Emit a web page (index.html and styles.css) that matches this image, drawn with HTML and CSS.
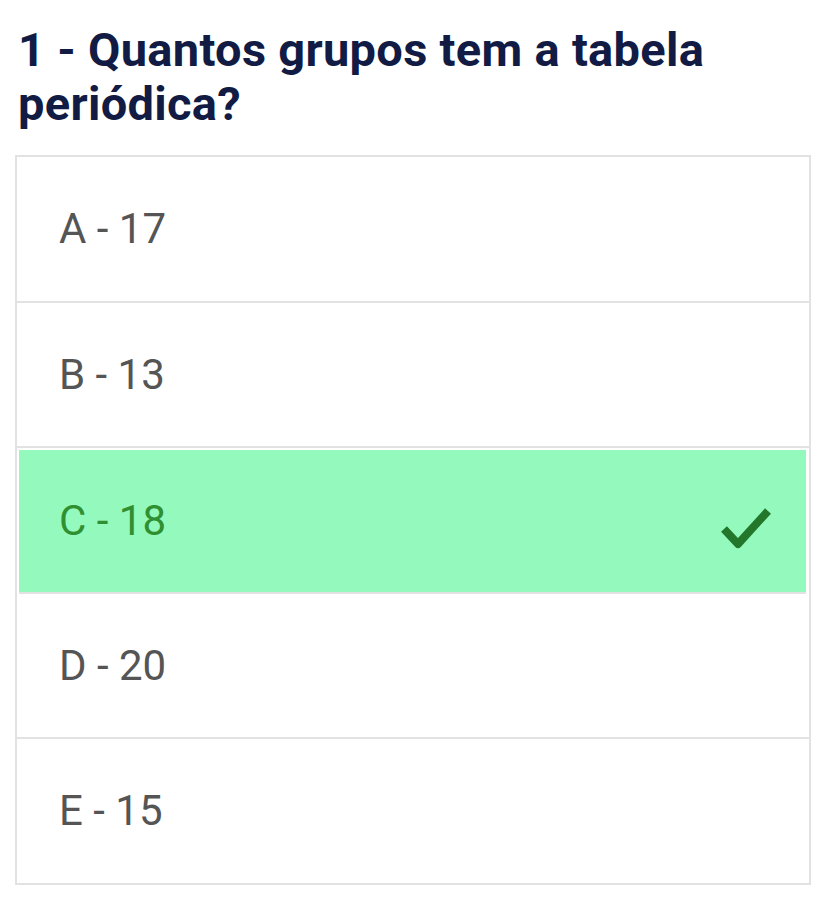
FILE: index.html
```html
<!DOCTYPE html>
<html lang="pt">
<head>
<meta charset="utf-8">
<link rel="stylesheet" href="styles.css">
</head>
<body>
<div class="quiz">
  <h1 class="question">1 - Quantos grupos tem a tabela periódica?</h1>
  <ul class="options">
    <li class="option">A - 17</li>
    <li class="option">B - 13</li>
    <li class="option correct">C - 18
      <svg class="check" viewBox="0 0 56 54" width="56" height="54" aria-hidden="true">
        <path d="M8 28 L22 43 L52 10" fill="none" stroke="#23772a" stroke-width="8" stroke-linecap="butt" stroke-linejoin="round"/>
      </svg>
    </li>
    <li class="option">D - 20</li>
    <li class="option">E - 15</li>
  </ul>
</div>
</body>
</html>
```
FILE: styles.css
```css
html, body {
  margin: 0;
  padding: 0;
  background: #ffffff;
}
body {
  font-family: Roboto, "Noto Sans", sans-serif;
}
.quiz {
  padding: 23px 10px 0 15px;
}
.question {
  margin: 0 0 24px 3px;
  font-size: 47px;
  font-weight: 700;
  line-height: 54px;
  color: #111b44;
  letter-spacing: 0.3px;
}
.options {
  list-style: none;
  margin: 0;
  padding: 0;
  border: 2px solid #e2e2e2;
  width: 792px;
}
.option {
  display: flex;
  align-items: center;
  justify-content: space-between;
  box-sizing: border-box;
  height: 145.5px;
  padding: 0 36px 0 42px;
  font-size: 42px;
  color: #555555;
  border-bottom: 2px solid #e2e2e2;
}
.option:last-child {
  border-bottom: none;
  height: 143.5px;
}
.option.correct {
  background: #93f9bc;
  color: #2f8f31;
  margin: 0 3px 0 2px;
  padding-left: 40px;
  padding-right: 34px;
  border-top: 2px solid #ffffff;
}
.check {
  display: block;
  margin-top: 14px;
}
```
